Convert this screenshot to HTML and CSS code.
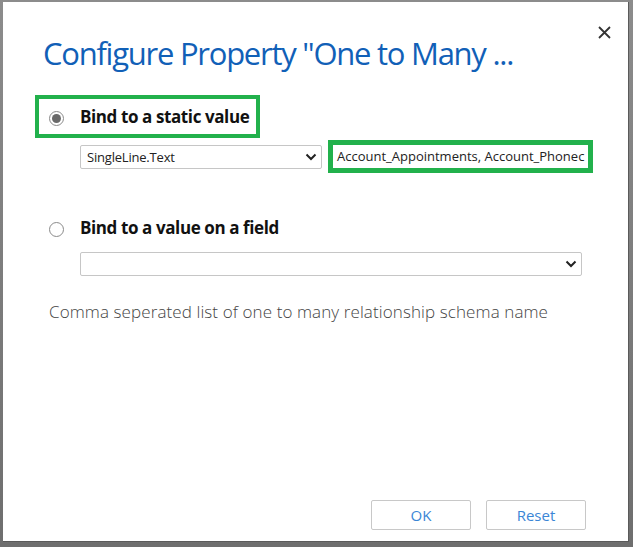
FILE: index.html
```html
<!DOCTYPE html>
<html lang="en">
<head>
<meta charset="utf-8">
<title>Configure Property</title>
<link rel="stylesheet" href="styles.css">
</head>
<body>
<div class="screen">
  <div class="dialog">
    <div class="header">
      <h1 class="title">Configure Property "One to Many ...</h1>
      <button class="close" aria-label="Close">
        <svg width="13" height="13" viewBox="0 0 13 13"><path d="M1 1 L12 12 M12 1 L1 12" stroke="#333" stroke-width="1.8" fill="none"/></svg>
      </button>
    </div>
    <div class="content">
      <div class="option-row highlight">
        <span class="radio checked"></span>
        <span class="option-label">Bind to a static value</span>
      </div>
      <div class="controls">
        <div class="select select-type">
          <span class="select-text">SingleLine.Text</span>
          <svg class="chevron" width="12" height="8" viewBox="0 0 12 8"><path d="M1.5 1.5 L6 6 L10.5 1.5" stroke="#222" stroke-width="2" fill="none"/></svg>
        </div>
        <div class="text-input">Account_Appointments, Account_Phonec</div>
      </div>
      <div class="option-row second">
        <span class="radio"></span>
        <span class="option-label">Bind to a value on a field</span>
      </div>
      <div class="select select-field">
        <span class="select-text"></span>
        <svg class="chevron" width="12" height="8" viewBox="0 0 12 8"><path d="M1.5 1.5 L6 6 L10.5 1.5" stroke="#222" stroke-width="2" fill="none"/></svg>
      </div>
      <p class="helper">Comma seperated list of one to many relationship schema name</p>
    </div>
    <div class="footer">
      <button class="btn">OK</button>
      <button class="btn">Reset</button>
    </div>
  </div>
</div>
</body>
</html>
```

FILE: styles.css
```css
* { box-sizing: border-box; }
html, body { margin: 0; padding: 0; }
body {
  width: 633px;
  height: 547px;
  overflow: hidden;
  background: #7a7a7a;
  font-family: "Open Sans", "Noto Sans", sans-serif;
}
.screen {
  width: 633px;
  height: 547px;
  padding: 2px 4px 5px 3px;
  background: linear-gradient(#8c8c8c, #6e6e6e);
}
.dialog {
  width: 626px;
  height: 540px;
  background: #fff;
  display: flex;
  flex-direction: column;
  border-right: 1px solid #5a5a5a;
  border-bottom: 1px solid #5a5a5a;
}
.header {
  display: flex;
  justify-content: space-between;
  align-items: flex-start;
  padding: 23px 16px 0 40px;
}
.title {
  margin: 8px 0 0 0;
  font-size: 31px;
  line-height: 40px;
  font-weight: 400;
  color: #1160b7;
  letter-spacing: -1.25px;
}
.close {
  border: 0;
  background: none;
  padding: 0;
  width: 15px;
  height: 15px;
  display: flex;
  align-items: center;
  justify-content: center;
}
.content {
  padding: 22px 0 0 32px;
}
.option-row {
  display: flex;
  align-items: center;
  height: 35px;
}
.option-row.highlight {
  display: inline-flex;
  height: 43px;
  border: 4px solid #22b14c;
  padding: 0 7px 0 10px;
}
.option-row.second {
  margin-top: 44px;
  padding-left: 14px;
  height: 28px;
}
.radio {
  width: 15px;
  height: 15px;
  border-radius: 50%;
  border: 1px solid #8a8a8a;
  margin-right: 16px;
  margin-top: 4px;
  flex: none;
  position: relative;
  background: #fff;
}
.radio.checked::after {
  content: "";
  position: absolute;
  left: 2px;
  top: 2px;
  width: 9px;
  height: 9px;
  border-radius: 50%;
  background: #6a6a6a;
}
.option-label {
  font-size: 17px;
  font-weight: 700;
  color: #111;
  letter-spacing: -0.4px;
}
.controls {
  display: flex;
  gap: 11px;
  margin: 7px 0 0 45px;
}
.select {
  height: 24px;
  border: 1px solid #c6c6c6;
  border-radius: 2px;
  display: flex;
  align-items: center;
  justify-content: space-between;
  padding: 0 4px 0 6px;
  background: #fff;
}
.select-type { width: 242px; }
.select-field { width: 502px; margin: 11px 0 0 45px; }
.select-text {
  font-size: 13px;
  color: #222;
  letter-spacing: -0.2px;
}
.chevron { flex: none; }
.text-input {
  width: 255px;
  height: 23px;
  outline: 5px solid #22b14c;
  background: #fff;
  font-size: 13px;
  color: #222;
  line-height: 23px;
  padding-left: 4px;
  white-space: nowrap;
  letter-spacing: 0;
}
.helper {
  margin: 24px 0 0 14px;
  font-size: 17px;
  font-weight: 300;
  color: #444;
  letter-spacing: 0.1px;
}
.footer {
  margin-top: auto;
  display: flex;
  justify-content: flex-end;
  gap: 15px;
  padding: 0 42px 11px 0;
}
.btn {
  width: 100px;
  height: 30px;
  border: 1px solid #c8c8c8;
  border-radius: 2px;
  background: #fff;
  color: #3b86d6;
  font-family: "Open Sans", "Noto Sans", sans-serif;
  font-size: 15px;
}
```
